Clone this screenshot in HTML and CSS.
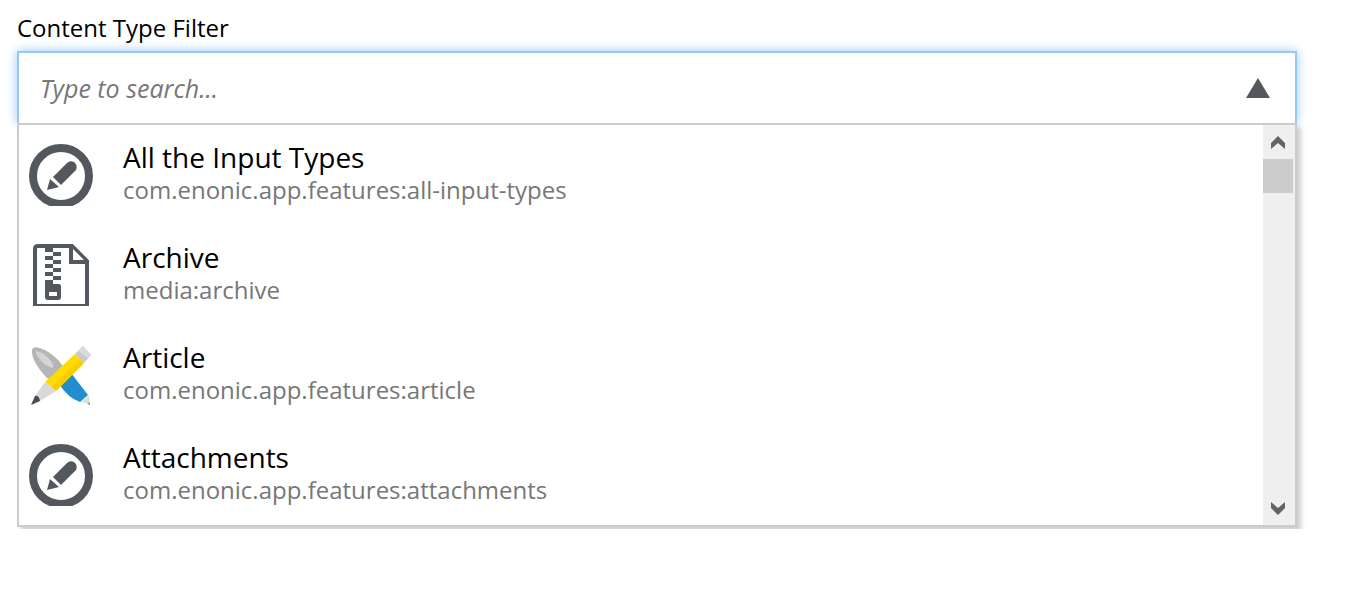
FILE: index.html
```html
<!DOCTYPE html>
<html lang="en">
<head>
<meta charset="utf-8">
<title>Content Type Filter</title>
<link rel="stylesheet" href="styles.css">
</head>
<body>
<svg class="defs" aria-hidden="true">
  <defs>
    <symbol id="icon-pencil" viewBox="0 0 64 62">
      <circle cx="32" cy="32" r="28" fill="none" stroke="#53585f" stroke-width="8"/>
      <path d="M24 33 L38 19 Q41 16 45 18 Q49 21 47 26 L32 41 Z" fill="#53585f"/>
      <path d="M21 35 L30 43 L18 46 Z" fill="#53585f"/>
    </symbol>
    <symbol id="icon-archive" viewBox="0 0 64 62">
      <path d="M6 62 V5 Q6 2 9 2 H43 L58 17 V62" fill="none" stroke="#53585f" stroke-width="4"/>
      <path d="M4 60 H60 V62 H4 Z M40 2 H44 L60 18 V20 H40 Z" fill="#53585f"/>
      <path d="M44 5 V16 H55 Z" fill="#fff"/>
      <path d="M16 4H24V8H16Z M24 8H32V12H24Z M16 12H24V16H16Z M24 16H32V20H24Z M16 20H24V24H16Z M24 24H32V28H24Z M16 28H24V32H16Z M24 32H32V36H24Z M16 36H24V40H30Q32 40 32 43V53Q32 56 29 56H19Q16 56 16 53Z" fill="#53585f"/>
      <path d="M20 48H28V52H20Z" fill="#fff"/>
    </symbol>
    <symbol id="icon-article" viewBox="0 0 64 62">
      <path d="M3 6 Q4 2 11 4 Q22 8 30 17 L38 28 L29 40 L18 34 Q2 17 3 6Z" fill="#b5b5b5"/>
      <path d="M6 7 Q14 7 22 17 Q26 23 23 24 Q11 20 6 7Z" fill="#d4d4d4"/>
      <path d="M30 40 L42 29 L59 51 L51 58 Q39 54 30 40Z" fill="#218fce"/>
      <path d="M52 58 L60 51 L61 60 Z" fill="#dedede"/>
      <path d="M58 60 L61 58 V61 Z" fill="#9a9a9a"/>
      <path d="M16 38 L46 10 L55 19 L27 47 Z" fill="#ffdc00"/>
      <path d="M23 43 L51 15 L55 19 L27 47 Z" fill="#fccb00"/>
      <path d="M46 10 L54 2 L62 11 L55 19 Z" fill="#c9c9c9"/>
      <path d="M49 7 L54 2 L62 11 L59 14 Z" fill="#dadada"/>
      <path d="M16 38 L27 47 L11 57 L6 52 Z" fill="#d9d9d9"/>
      <path d="M6 52 Q10 51 11 57 L2 61 Z" fill="#4b4b4b"/>
    </symbol>
  </defs>
</svg>
<main class="field">
  <label class="field-label" for="type-filter">Content Type Filter</label>
  <div class="combobox">
    <div class="combobox-control">
      <input class="combobox-input" id="type-filter" type="text" placeholder="Type to search..." autocomplete="off">
      <button class="combobox-toggle" type="button" aria-label="Close list">
        <svg width="24" height="20" viewBox="0 0 24 20"><path d="M12 0 L24 20 H0 Z" fill="#53585f"/></svg>
      </button>
    </div>
    <div class="dropdown">
      <ul class="options">
        <li class="option">
          <svg class="option-icon"><use href="#icon-pencil"/></svg>
          <div class="option-text"><div class="option-name">All the Input Types</div><div class="option-path">com.enonic.app.features:all-input-types</div></div>
        </li>
        <li class="option">
          <svg class="option-icon"><use href="#icon-archive"/></svg>
          <div class="option-text"><div class="option-name">Archive</div><div class="option-path">media:archive</div></div>
        </li>
        <li class="option">
          <svg class="option-icon"><use href="#icon-article"/></svg>
          <div class="option-text"><div class="option-name">Article</div><div class="option-path">com.enonic.app.features:article</div></div>
        </li>
        <li class="option">
          <svg class="option-icon"><use href="#icon-pencil"/></svg>
          <div class="option-text"><div class="option-name">Attachments</div><div class="option-path">com.enonic.app.features:attachments</div></div>
        </li>
      </ul>
      <div class="scrollbar">
        <button class="scroll-button" type="button" aria-label="Scroll up">
          <svg width="16" height="14" viewBox="0 0 16 14"><path d="M8 1 L15 8 V14 L8 8 L1 14 V8 Z" fill="#636363"/></svg>
        </button>
        <div class="scroll-track"><div class="scroll-thumb"></div></div>
        <button class="scroll-button" type="button" aria-label="Scroll down">
          <svg width="16" height="14" viewBox="0 0 16 14"><path d="M8 14 L15 7 V1 L8 7 L1 1 V7 Z" fill="#636363"/></svg>
        </button>
      </div>
    </div>
  </div>
</main>
</body>
</html>
```
FILE: styles.css
```css
* {
  box-sizing: border-box;
}

body {
  margin: 0;
  background: #fff;
  color: #000;
  font-family: "Open Sans", "Noto Sans", sans-serif;
}

button {
  padding: 0;
  border: 0;
  background: none;
}

svg {
  display: block;
}

.defs {
  position: absolute;
  width: 0;
  height: 0;
}

.field {
  padding: 12px 73px 0 17px;
}

.field-label {
  display: block;
  height: 39px;
  font-size: 24px;
  line-height: 32px;
}

.combobox {
  padding-bottom: 2px;
  clip-path: inset(-12px -12px 0);
}

.combobox-control {
  display: flex;
  align-items: center;
  height: 72px;
  padding: 0 25px 0 21px;
  border: 2px solid #96c8f2;
  border-bottom: 0;
  box-shadow: 0 0 10px #96c8f2;
}

.combobox-input {
  flex: 1;
  min-width: 0;
  height: 64px;
  padding: 0;
  border: 0;
  outline: 0;
  background: none;
  color: #000;
  font: italic 25px "Open Sans", "Noto Sans", sans-serif;
}

.combobox-input::placeholder {
  color: #777;
  opacity: 1;
}

.dropdown {
  position: relative;
  display: flex;
  border: 2px solid #ccc;
  background: #fff;
  box-shadow: 4px 4px 5px rgba(0, 0, 0, 0.2);
}

.options {
  flex: 1;
  margin: 0;
  padding: 0;
  list-style: none;
}

.option {
  display: flex;
  align-items: center;
  gap: 30px;
  height: 100px;
  padding: 0 10px;
}

.option-icon {
  flex: none;
  width: 64px;
  height: 62px;
}

.option-text {
  padding-bottom: 4px;
}

.option-name {
  font-size: 28px;
  line-height: 34px;
}

.option-path {
  color: #777;
  font-size: 24px;
  line-height: 32px;
}

.scrollbar {
  display: flex;
  flex-direction: column;
  width: 32px;
  background: #efefef;
}

.scroll-button {
  display: grid;
  place-items: center;
  width: 30px;
  height: 34px;
}

.scroll-track {
  flex: 1;
}

.scroll-thumb {
  width: 30px;
  height: 34px;
  background: #ccc;
}
```
